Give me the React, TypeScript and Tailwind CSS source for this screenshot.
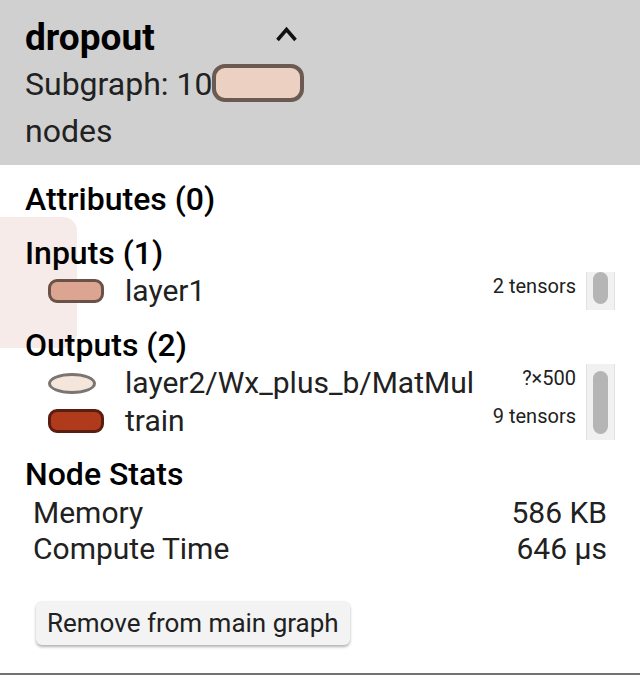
import React from "react";

type Item = {
  name: string;
  shape: "pill" | "ellipse";
  fill: string;
  stroke: string;
  note: string;
};

const inputs: Item[] = [
  { name: "layer1", shape: "pill", fill: "#dba591", stroke: "#6b5248", note: "2 tensors" },
];

const outputs: Item[] = [
  { name: "layer2/Wx_plus_b/MatMul", shape: "ellipse", fill: "#f5e6dc", stroke: "#7b7570", note: "?×500" },
  { name: "train", shape: "pill", fill: "#b03a1c", stroke: "#5a1d10", note: "9 tensors" },
];

function NodeIcon({ item }: { item: Item }) {
  if (item.shape === "ellipse") {
    return (
      <span
        className="block w-[48px] h-[21px] rounded-[50%] border-[3px] box-border"
        style={{ background: item.fill, borderColor: item.stroke }}
      />
    );
  }
  return (
    <span
      className="block w-[56px] h-[24px] rounded-[9px] border-[3px] box-border"
      style={{ background: item.fill, borderColor: item.stroke }}
    />
  );
}

function ItemList({ items, thumb }: { items: Item[]; thumb: string }) {
  return (
    <div className="flex">
      <div className="flex-1">
        {items.map((item) => (
          <div key={item.name} className="flex items-center h-[38px]">
            <div className="w-[100px] pl-[23px] flex items-center">
              <NodeIcon item={item} />
            </div>
            <div className="flex-1 text-[30px] leading-[34px] text-[#212121]">{item.name}</div>
            <div className="self-start mt-[3px] text-[20px] leading-[22px] text-[#212121]">{item.note}</div>
          </div>
        ))}
      </div>
      <div className={`ml-[10px] w-[29px] bg-[#f1f1f1] border-x border-[#e2e2e2] flex justify-center ${thumb}`}>
        <div className="w-[15px] h-full rounded-full bg-[#b5b5b5]" />
      </div>
    </div>
  );
}

export default function App() {
  return (
    <div className="w-[640px] h-[675px] bg-white border-b-2 border-[#727272] shadow-[0_2px_3px_rgba(0,0,0,0.4)] font-['Roboto',sans-serif] overflow-hidden">
      <div className="bg-[#d0d0d0] h-[165px] pl-[25px] pt-[17px]">
        <div className="flex items-start justify-between w-[274px] h-[41px]">
          <div className="text-[37px] leading-[41px] font-bold text-black">dropout</div>
          <svg width="24" height="24" viewBox="0 0 24 24" className="mt-[9px]">
            <polyline points="2.5,14 11.5,3.5 20.5,14" fill="none" stroke="#111" strokeWidth="3.5" />
          </svg>
        </div>
        <div className="flex items-end h-[40px] mt-[4px]">
          <span className="text-[32px] leading-[36px] text-[#212121]">Subgraph: 10</span>
          <span className="block w-[92px] h-[38px] rounded-[13px] border-[4px] border-[#6b5a52] bg-[#ecd0c2] box-border" />
        </div>
        <div className="mt-[11px] text-[32px] leading-[36px] text-[#212121]">nodes</div>
      </div>

      <div className="relative isolate px-[25px] pt-[16px]">
        <div className="absolute -z-10 left-[-14px] top-[52px] w-[91px] h-[131px] rounded-[14px] bg-[#f6ebe9]" />

        <div className="text-[32px] leading-[37px] font-medium text-black">Attributes (0)</div>

        <div className="mt-[17px] text-[32px] leading-[37px] font-medium text-black">Inputs (1)</div>
        <ItemList items={inputs} thumb="pt-0 pb-[6px]" />

        <div className="mt-[17px] text-[32px] leading-[37px] font-medium text-black">Outputs (2)</div>
        <ItemList items={outputs} thumb="pt-[7px] pb-[6px]" />

        <div className="mt-[16px] text-[32px] leading-[37px] font-medium text-black">Node Stats</div>
        <div className="mt-[2px] pl-[8px] pr-[8px]">
          <div className="flex justify-between h-[36px] text-[30px] leading-[36px] text-[#212121]">
            <span>Memory</span>
            <span>586 KB</span>
          </div>
          <div className="flex justify-between h-[36px] text-[30px] leading-[36px] text-[#212121]">
            <span>Compute Time</span>
            <span>646 µs</span>
          </div>
        </div>

        <button className="mt-[34px] ml-[11px] h-[44px] px-[11px] rounded-[6px] bg-[#f3f3f3] text-[26px] leading-[30px] text-[#212121] shadow-[0_2px_3px_rgba(0,0,0,0.3)]">
          Remove from main graph
        </button>
      </div>
    </div>
  );
}
